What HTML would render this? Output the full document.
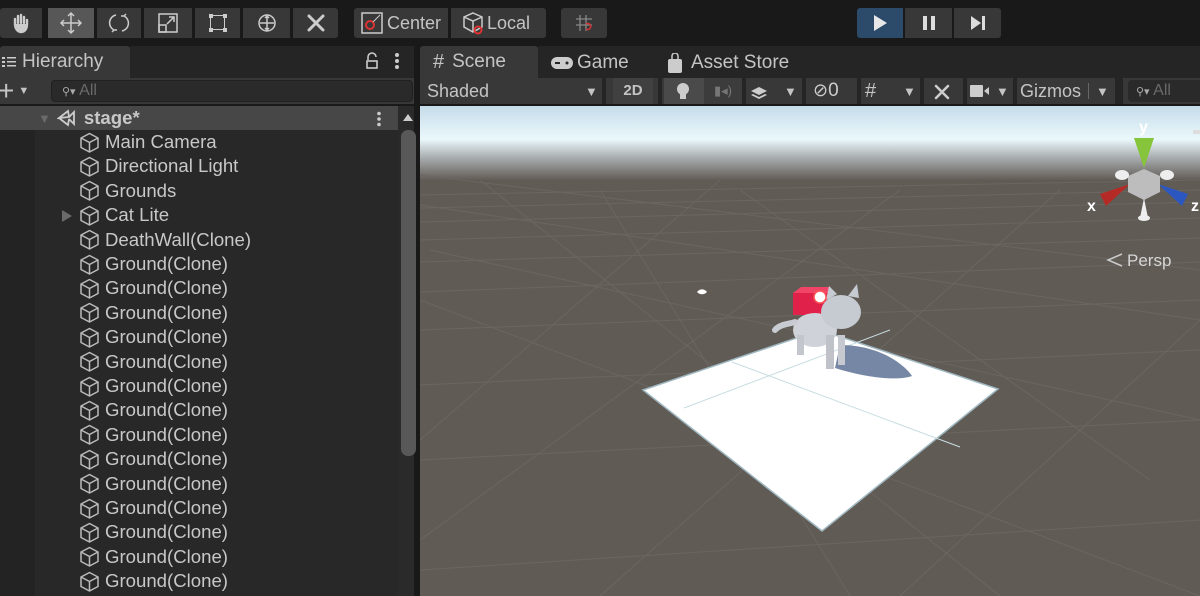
<!DOCTYPE html>
<html><head><meta charset="utf-8"><style>
*{margin:0;padding:0;box-sizing:border-box}
body{width:1200px;height:596px;overflow:hidden;background:#191919;font-family:"Liberation Sans",sans-serif;color:#c4c4c4;position:relative}
.abs{position:absolute}
.btn{position:absolute;top:8px;height:30px;background:#383838;display:flex;align-items:center;justify-content:center;color:#c4c4c4;font-size:18px}
.tb{position:absolute;top:78px;height:26px;background:#383838;display:flex;align-items:center;font-size:18px;color:#c4c4c4}
.row{position:absolute;left:79px;height:24px;font-size:18.6px;color:#c8c8c8;display:flex;align-items:center;white-space:nowrap}
.row svg{margin-right:5px}
</style></head><body>
<div class="btn" style="left:0;width:42px;border-radius:3px 0 0 3px"><svg width="22" height="22" viewBox="0 0 22 22"><path d="M5 12V7M8 11V4M11 11V3M14 11V5M17 12V8M5 12c0 5 3 8 6 8s6-2 6-8" stroke="#ccc" stroke-width="2.4" fill="#ccc" stroke-linecap="round"/></svg></div>
<div class="btn" style="left:48px;width:46px;background:#575757"><svg width="26" height="26" viewBox="0 0 26 26" fill="none" stroke="#ccc" stroke-width="1.5"><path d="M13 3v20M3 13h20M10 6l3-3 3 3M10 20l3 3 3-3M6 10l-3 3 3 3M20 10l3 3-3 3"/></svg></div>
<div class="btn" style="left:97px;width:44px"><svg width="24" height="24" viewBox="0 0 24 24" fill="none" stroke="#ccc" stroke-width="1.5"><path d="M9 4a8 8 0 0 0-2 15M15 20a8 8 0 0 0 2-15M7 19l-2 2M7 19l3 0M17 5l2-2M17 5l-3 0"/></svg></div>
<div class="btn" style="left:144px;width:48px"><svg width="22" height="22" viewBox="0 0 22 22" fill="none" stroke="#ccc" stroke-width="1.5"><rect x="2" y="2" width="18" height="18"/><rect x="2" y="13" width="7" height="7"/><path d="M10 12l7-7M12 5h5v5"/></svg></div>
<div class="btn" style="left:195px;width:45px"><svg width="22" height="22" viewBox="0 0 22 22" fill="#ccc"><rect x="2" y="2" width="4" height="4"/><rect x="16" y="2" width="4" height="4"/><rect x="2" y="16" width="4" height="4"/><rect x="16" y="16" width="4" height="4"/><path d="M6 3.5h10M6 17.5h10M3.5 6v10M17.5 6v10" stroke="#ccc" stroke-width="1"/></svg></div>
<div class="btn" style="left:243px;width:47px"><svg width="26" height="26" viewBox="0 0 26 26" fill="none" stroke="#ccc" stroke-width="1.5"><circle cx="13" cy="13" r="8"/><path d="M13 6v14M6 13h14M11 8l2-2 2 2M11 18l2 2 2-2"/></svg></div>
<div class="btn" style="left:293px;width:45px;border-radius:0 3px 3px 0"><svg width="24" height="24" viewBox="0 0 24 24" stroke="#ccc" stroke-width="3" stroke-linecap="round"><path d="M5 5l14 14M19 5L5 19"/></svg></div>
<div class="btn" style="left:354px;width:94px;border-radius:3px 0 0 3px;justify-content:flex-start;padding-left:7px"><svg width="22" height="22" viewBox="0 0 22 22" fill="none"><rect x="1" y="1" width="20" height="20" stroke="#ccc" stroke-width="1.5"/><circle cx="9" cy="13" r="4" stroke="#d33" stroke-width="2"/><path d="M12 10l7-7" stroke="#ccc"/></svg><span style="margin-left:4px">Center</span></div>
<div class="btn" style="left:451px;width:95px;border-radius:0 3px 3px 0;justify-content:flex-start;padding-left:10px"><svg width="24" height="24" viewBox="0 0 24 24" fill="none" stroke="#ccc" stroke-width="1.5"><path d="M12 2l9 4v10l-9 5-9-5V6zM3 6l9 4 9-4M12 10v11"/><circle cx="17" cy="19" r="3.5" stroke="#d33" stroke-width="2"/></svg><span style="margin-left:2px">Local</span></div>
<div class="btn" style="left:561px;width:46px;border-radius:3px"><svg width="20" height="20" viewBox="0 0 20 20" fill="none" stroke="#888" stroke-width="1.3"><path d="M6 2v16M12 2v16M2 6h16M2 12h16"/><path d="M12 16a3 3 0 1 0 0-5" stroke="#c33" stroke-width="1.6"/></svg></div>
<div class="btn" style="left:857px;width:46px;background:#2c4a6a;border-radius:3px 0 0 3px"><svg width="16" height="18"><path d="M2 1l13 8-13 8z" fill="#e8e8e8"/></svg></div>
<div class="btn" style="left:905px;width:47px"><svg width="14" height="16"><rect x="1" y="1" width="4" height="14" fill="#ddd"/><rect x="9" y="1" width="4" height="14" fill="#ddd"/></svg></div>
<div class="btn" style="left:954px;width:47px;border-radius:0 3px 3px 0"><svg width="16" height="16"><path d="M1 1l10 7-10 7z" fill="#ddd"/><rect x="12" y="1" width="3" height="14" fill="#ddd"/></svg></div>

<div class="abs" style="left:0;top:46px;width:130px;height:32px;background:#383838;border-radius:3px 3px 0 0;font-size:19px;display:flex;align-items:center;padding-left:2px"><svg width="14" height="12" fill="#ccc"><rect x="0" y="1" width="3" height="2"/><rect x="5" y="1" width="9" height="1.5"/><rect x="0" y="5" width="3" height="2"/><rect x="5" y="5" width="9" height="1.5"/><rect x="0" y="9" width="3" height="2"/><rect x="5" y="9" width="9" height="1.5"/></svg><span style="margin-left:6px">Hierarchy</span></div>
<div class="abs" style="left:130px;top:46px;width:284px;height:32px;background:#252525"></div>
<svg class="abs" style="left:364px;top:52px" width="16" height="18" fill="none" stroke="#ccc" stroke-width="1.6"><path d="M4 8V5a4 4 0 0 1 8 0"/><rect x="3" y="9" width="10" height="7"/></svg>
<svg class="abs" style="left:394px;top:52px" width="6" height="18" fill="#ccc"><circle cx="3" cy="3" r="2"/><circle cx="3" cy="9" r="2"/><circle cx="3" cy="15" r="2"/></svg>
<div class="abs" style="left:414px;top:46px;width:6px;height:550px;background:#191919"></div>
<div class="abs" style="left:420px;top:46px;width:118px;height:32px;background:#383838;border-radius:3px 3px 0 0;font-size:19px;display:flex;align-items:center;padding-left:13px"><span style="font-size:20px">#</span><span style="margin-left:8px">Scene</span></div>
<div class="abs" style="left:538px;top:46px;width:662px;height:32px;background:#252525;font-size:19px"><div class="abs" style="left:12px;top:6px;display:flex;align-items:center"><svg width="24" height="14"><rect x="1" y="1" width="22" height="12" rx="6" fill="#ccc"/><rect x="5" y="6" width="5" height="2" fill="#252525"/><circle cx="17" cy="7" r="1.5" fill="#252525"/></svg><span style="margin-left:3px">Game</span></div><div class="abs" style="left:130px;top:6px;display:flex;align-items:center"><svg width="14" height="20"><rect x="0" y="6" width="14" height="14" rx="2" fill="#ccc"/><path d="M4 7V3a3 3 0 0 1 6 0v4" stroke="#ccc" stroke-width="1.5" fill="none"/></svg><span style="margin-left:9px">Asset Store</span></div></div>

<div class="tb" style="left:0;width:414px">
 <span style="font-size:28px;margin-left:-2px;line-height:20px">+</span><span style="font-size:11px;margin-left:4px">▼</span>
 <div class="abs" style="left:51px;top:2px;width:362px;height:22px;background:#2a2a2a;border:1px solid #202020;border-radius:4px;font-size:16px;color:#6a6a6a;padding-left:10px;line-height:20px"><span style="font-size:11px;color:#aaa">⚲▾</span> All</div>
</div>
<div class="abs" style="left:0;top:106px;width:414px;height:490px;background:#282828"></div>
<div class="abs" style="left:0;top:106px;width:35px;height:490px;background:#232323"></div>
<div class="abs" style="left:0;top:106px;width:398px;height:24px;background:#474747"></div>
<div class="abs" style="left:398px;top:106px;width:16px;height:490px;background:#2a2a2a"></div>
<div class="abs" style="left:401px;top:130px;width:15px;height:326px;background:#585858;border-radius:7px"></div>
<svg class="abs" style="left:402px;top:113px" width="12" height="9"><path d="M1 8l5-7 5 7z" fill="#ccc"/></svg>
<div class="row" style="top:106px;left:38px;font-weight:bold;font-size:18.6px"><span style="color:#6a6a6a;font-size:13px;margin-right:6px">▼</span><svg width="20" height="20" viewBox="0 0 20 20" fill="none" stroke="#ccc" stroke-width="1.8"><path d="M2 10l9-7 1 6zM2 10l9 7 1-6M12 9l5-5v12l-5-5"/></svg><span style="margin-left:2px">stage*</span></div>
<svg class="abs" style="left:376px;top:111px" width="6" height="16" fill="#ccc"><circle cx="3" cy="2.5" r="1.8"/><circle cx="3" cy="8" r="1.8"/><circle cx="3" cy="13.5" r="1.8"/></svg>
<svg class="abs" style="left:61px;top:209px" width="12" height="14"><path d="M1 1l10 6-10 6z" fill="#6a6a6a"/></svg>
<div id="rows"></div>

<div class="tb" style="left:420px;width:780px;background:#383838">
 <span style="margin-left:7px">Shaded</span><span class="abs" style="left:165px;font-size:13px">▼</span>
 <div class="abs" style="left:182px;top:0;width:4px;height:26px;background:#252525"></div>
 <div class="abs" style="left:193px;top:0;width:40px;height:26px;background:#404040;font-size:15px;font-weight:bold;text-align:center;line-height:26px">2D</div>
 <div class="abs" style="left:238px;top:0;width:4px;height:26px;background:#252525"></div>
 <div class="abs" style="left:244px;top:0;width:40px;height:26px;background:#4a4a4a"><svg style="margin:4px 0 0 12px" width="14" height="18"><circle cx="7" cy="7" r="6" fill="#ccc"/><rect x="4" y="12" width="6" height="5" fill="#ccc"/></svg></div>
 <div class="abs" style="left:284px;top:0;width:38px;height:26px;background:#3c3c3c;color:#777;font-size:13px;text-align:center;line-height:26px">▮◂)</div>
 <div class="abs" style="left:322px;top:0;width:4px;height:26px;background:#252525"></div>
 <svg class="abs" style="left:330px;top:5px" width="18" height="16" fill="#ccc"><path d="M1 8l8-4 8 4-8 4z"/><path d="M1 12l8 4 8-4-2-1-6 3-6-3z"/></svg>
 <span class="abs" style="left:364px;font-size:13px">▼</span>
 <div class="abs" style="left:382px;top:0;width:4px;height:26px;background:#252525"></div>
 <span class="abs" style="left:393px;color:#ccc;font-size:19px"><span style="font-size:18px">⊘</span>0</span>
 <div class="abs" style="left:437px;top:0;width:4px;height:26px;background:#252525"></div>
 <span class="abs" style="left:445px;font-size:20px">#</span><span class="abs" style="left:483px;font-size:13px">▼</span>
 <div class="abs" style="left:500px;top:0;width:4px;height:26px;background:#252525"></div>
 <svg class="abs" style="left:512px;top:4px" width="20" height="20" stroke="#ccc" stroke-width="2.6" stroke-linecap="round"><path d="M4 4l12 12M16 4L4 16"/></svg>
 <div class="abs" style="left:543px;top:0;width:4px;height:26px;background:#252525"></div>
 <svg class="abs" style="left:550px;top:7px" width="20" height="12" fill="#ccc"><rect x="0" y="0" width="13" height="12" rx="1"/><path d="M14 6l5-4v8z"/></svg><span class="abs" style="left:576px;font-size:13px">▼</span>
 <div class="abs" style="left:593px;top:0;width:4px;height:26px;background:#252525"></div>
 <span class="abs" style="left:600px">Gizmos</span><div class="abs" style="left:668px;top:5px;width:1px;height:16px;background:#666"></div><span class="abs" style="left:676px;font-size:13px">▼</span>
 <div class="abs" style="left:695px;top:0;width:8px;height:26px;background:#252525"></div>
 <div class="abs" style="left:708px;top:2px;width:80px;height:22px;background:#2a2a2a;border-radius:4px;font-size:16px;color:#6a6a6a;padding-left:8px;line-height:22px"><span style="font-size:11px;color:#aaa">⚲▾</span> All</div>
</div>
<div class="abs" style="left:420px;top:104px;width:780px;height:2px;background:#191919"></div>

<svg class="abs" style="left:420px;top:106px" width="780" height="490" viewBox="420 106 780 490">
<defs><linearGradient id="sky" x1="0" y1="0" x2="0" y2="1"><stop offset="0" stop-color="#c6dcea"/><stop offset="0.45" stop-color="#eaf8fb"/><stop offset="0.7" stop-color="#a8acae"/><stop offset="1" stop-color="#625c57"/></linearGradient></defs>
<rect x="420" y="106" width="780" height="490" fill="#615b56"/>
<rect x="420" y="106" width="780" height="74" fill="url(#sky)"/>
<g stroke="#6b6661" stroke-width="1" fill="none">
<path d="M420 195L1200 180M420 208L1200 190M420 222L1200 202M420 240L1200 218M420 262L1200 238M420 292L1200 262M420 330L1200 300M420 385L1200 350M420 460L1200 420M420 570L1200 520"/>
<path d="M420 175L1200 270M420 205L1200 320M430 250L1200 420M420 300L1200 596M480 180L1000 596M600 190L850 596M740 190L1150 480M420 440L720 180M420 540L900 190M600 596L1060 190M900 596L1200 320"/>
</g>
<polygon points="643,390 820,330 998,389 822,531" fill="#ffffff" stroke="#9fb7c0" stroke-width="1.5"/>
<path d="M684 408L890 330M732 362L960 447" stroke="#c9dde2" stroke-width="1"/>
<path d="M840 345C880 345 905 365 912 376 895 382 860 376 835 368z" fill="#7687a6"/>
<rect x="793" y="293" width="35" height="22" fill="#e0224a"/>
<path d="M793 293l8-6h30l-3 6z" fill="#f04566"/>
<ellipse cx="815" cy="330" rx="22" ry="17" fill="#cfd2d8"/>
<path d="M775 330c5-6 15-6 20-8" stroke="#c8ccd2" stroke-width="6" stroke-linecap="round"/>
<rect x="797" y="335" width="7" height="20" fill="#c3c6cc"/><rect x="826" y="335" width="8" height="34" fill="#bfc2c8"/><rect x="838" y="335" width="7" height="30" fill="#c6c9cf"/>
<ellipse cx="841" cy="312" rx="20" ry="17" fill="#c6cad1"/>
<path d="M826 300l3-14 8 8zM848 296l9-12 2 14z" fill="#c6cad1"/>
<circle cx="820" cy="297" r="6" fill="#fff" stroke="#f55" stroke-width="1.5"/>
<path d="M697 292c3-4 8-3 10 0-3 3-7 3-10 0z" fill="#fff"/>
<path d="M1134 138h20l-10 30z" fill="#86c43c"/>
<path d="M1100 194l30-10-24 22z" fill="#b52a25"/>
<path d="M1188 194l-30-10 24 22z" fill="#2c56c0"/>
<path d="M1128 176l16-7 16 7v16l-16 8-16-8z" fill="#bdbdbd"/>
<ellipse cx="1122" cy="175" rx="7" ry="5" fill="#eee"/><ellipse cx="1167" cy="175" rx="7" ry="5" fill="#eee"/>
<path d="M1140 218l4-20 4 20z" fill="#eee"/><ellipse cx="1144" cy="218" rx="6" ry="3" fill="#eee"/>
<text x="1139" y="132" font-size="16" font-weight="bold" fill="#fff" font-family="Liberation Sans">y</text>
<text x="1087" y="211" font-size="16" font-weight="bold" fill="#fff" font-family="Liberation Sans">x</text>
<text x="1191" y="211" font-size="16" font-weight="bold" fill="#fff" font-family="Liberation Sans">z</text>
<path d="M1122 254l-14 6 14 6" stroke="#ccc" stroke-width="1.5" fill="none"/>
<text x="1127" y="266" font-size="17" fill="#d6d6d6" font-family="Liberation Sans">Persp</text>
<rect x="1193" y="130" width="7" height="4" fill="#ddd"/>
</svg>
<script>
var names=["Main Camera","Directional Light","Grounds","Cat Lite","DeathWall(Clone)"];for(var i=0;i<14;i++)names.push("Ground(Clone)");
var h="";for(var i=0;i<names.length;i++){var t=130+i*24.4;h+='<div class="row" style="top:'+t.toFixed(1)+'px"><svg width="21" height="21" viewBox="0 0 21 21" fill="none" stroke="#bbb" stroke-width="1.5" stroke-linejoin="round"><path d="M10.5 1.5l8.5 4.5v9.5l-8.5 4.5-8.5-4.5V6zM2 6l8.5 4.5L19 6M10.5 10.5V20"/></svg>'+names[i]+'</div>';}
document.getElementById("rows").innerHTML=h;
</script>
</body></html>
